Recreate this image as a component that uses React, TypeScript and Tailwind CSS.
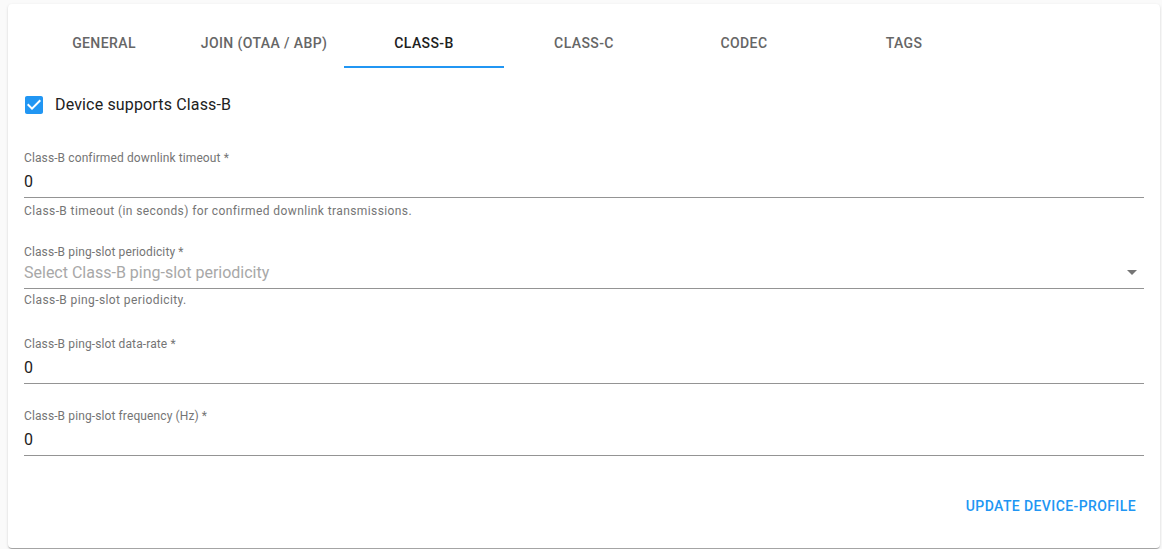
import React from "react";

const tabs = ["General", "Join (OTAA / ABP)", "Class-B", "Class-C", "Codec", "Tags"];

type FieldProps = {
  label: string;
  value: string;
  helper?: string;
};

const TextField = ({ label, value, helper }: FieldProps) => (
  <div className="flex flex-col">
    <div className="h-[16px] text-[12px] leading-[16px] tracking-[0.11px] text-[#757575]">{label}</div>
    <div className="h-[32px] pt-[6px] pb-[7px] text-[16px] leading-[19px] tracking-[0.15px] text-[#212121] border-b border-[#949494]">
      {value}
    </div>
    {helper && (
      <div className="mt-[3px] text-[12px] leading-[20px] tracking-[0.4px] text-[#757575]">{helper}</div>
    )}
  </div>
);

const App = () => {
  return (
    <div
      className="h-[549px] bg-[#fafafa] pt-[4px] pl-[8px]"
      style={{ fontFamily: "Roboto, 'Liberation Sans', sans-serif" }}
    >
      <div className="w-[1152px] rounded-[4px] bg-white px-[16px] pt-[16px] pb-[24px] shadow-[0px_2px_1px_-1px_rgba(0,0,0,0.2),0px_1px_1px_0px_rgba(0,0,0,0.14),0px_1px_3px_0px_rgba(0,0,0,0.12)]">
        {/* tabs */}
        <div className="flex h-[48px]">
          {tabs.map((t) => {
            const active = t === "Class-B";
            return (
              <div
                key={t}
                className={
                  active
                    ? "relative flex w-[160px] items-center justify-center pb-[1px] text-[14px] font-medium uppercase tracking-[0.4px] text-[#212121]"
                    : "relative flex w-[160px] items-center justify-center pb-[1px] text-[14px] font-medium uppercase tracking-[0.4px] text-[#666666]"
                }
              >
                {t}
                {active && <span className="absolute bottom-0 left-0 h-[2px] w-full bg-[#2196f3]" />}
              </div>
            );
          })}
        </div>

        {/* checkbox */}
        <div className="mt-[16px] ml-[-11px] flex h-[42px] items-center">
          <div className="p-[9px]">
            <svg width="24" height="24" viewBox="0 0 24 24" className="fill-[#2196f3]">
              <path d="M19 3H5c-1.11 0-2 .9-2 2v14c0 1.1.89 2 2 2h14c1.11 0 2-.9 2-2V5c0-1.1-.89-2-2-2zm-9 14l-5-5 1.41-1.41L10 14.17l7.59-7.59L19 8l-9 9z" />
            </svg>
          </div>
          <span className="text-[16px] leading-[24px] tracking-[0.15px] text-[#212121]">Device supports Class-B</span>
        </div>

        <div className="mt-[24px]">
          <TextField
            label="Class-B confirmed downlink timeout *"
            value="0"
            helper="Class-B timeout (in seconds) for confirmed downlink transmissions."
          />
        </div>

        {/* select */}
        <div className="mt-[23px] flex flex-col">
          <div className="h-[16px] text-[12px] leading-[16px] tracking-[0.11px] text-[#757575]">
            Class-B ping-slot periodicity *
          </div>
          <div className="relative h-[29px] pt-[3px] text-[16px] leading-[19px] text-[#a8a8a8] border-b border-[#949494]">
            Select Class-B ping-slot periodicity
            <svg
              width="24"
              height="24"
              viewBox="0 0 24 24"
              className="absolute right-0 top-0 fill-[#757575]"
            >
              <path d="M7 10l5 5 5-5z" />
            </svg>
          </div>
          <div className="mt-[1px] text-[12px] leading-[20px] tracking-[0.4px] text-[#757575]">
            Class-B ping-slot periodicity.
          </div>
        </div>

        <div className="mt-[26px]">
          <TextField label="Class-B ping-slot data-rate *" value="0" />
        </div>

        <div className="mt-[24px]">
          <TextField label="Class-B ping-slot frequency (Hz) *" value="0" />
        </div>

        <div className="mt-[32px] flex justify-end">
          <button className="h-[36px] px-[8px] text-[14px] font-medium uppercase tracking-[0.4px] text-[#2196f3]">
            Update device-profile
          </button>
        </div>
      </div>
    </div>
  );
};

export default App;
